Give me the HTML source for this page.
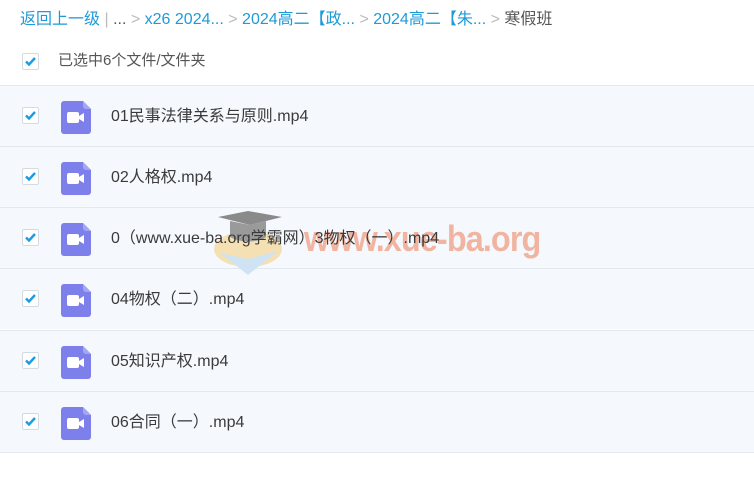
<!DOCTYPE html><html><head><meta charset="utf-8"><style>
body{margin:0;width:754px;height:482px;background:#fff;font-family:"Liberation Sans","Noto Sans CJK SC",sans-serif;overflow:hidden;position:relative}
.bc{position:absolute;left:20px;top:5px;font-size:16px;color:#1f9ad9;white-space:nowrap}
.bc .g{color:#bbb}.bc .k{color:#555}
.cb{position:absolute;left:22px;width:17px;height:17px;border:1px solid #d6dbe2;border-radius:2px;background:#fff;box-sizing:border-box}
.cb svg{position:absolute;left:1px;top:1px}
.sel{position:absolute;left:58px;top:49px;font-size:15px;color:#555}
.row{position:absolute;left:0;width:754px;height:61px;background:#f5f9fd;border-top:1px solid #e1e8f0;box-sizing:border-box}
.row .cb{top:21px}
.ic{position:absolute;left:61px;top:15px;width:30px;height:33px}
.nm{position:absolute;left:111px;top:16px;font-size:16px;color:#3a3a3a;white-space:nowrap;z-index:2}
.bot{position:absolute;left:0;top:452px;width:754px;border-top:1px solid #e1e8f0}
.wm{position:absolute;left:304px;top:218px;font-size:36px;font-weight:bold;color:#f0b4a0;letter-spacing:-1px;transform:scaleX(.9);transform-origin:left;z-index:1}
.cap{position:absolute;left:208px;top:207px;z-index:1}
</style></head><body>
<div class="bc">返回上一级 <span class="g">|</span> <span class="k">...</span> <span class="g">&gt;</span> x26 2024... <span class="g">&gt;</span> 2024高二【政... <span class="g">&gt;</span> 2024高二【朱... <span class="g">&gt;</span> <span class="k">寒假班</span></div>
<div class="cb" style="top:53px"><svg width="13" height="13" viewBox="0 0 13 13"><path d="M2 6.5l3 3 6-6.5" stroke="#1a9be6" stroke-width="2.4" fill="none"/></svg></div>
<div class="sel">已选中6个文件/文件夹</div>
<div class="row" style="top:85px"></div>
<div class="row" style="top:146px"></div>
<div class="row" style="top:207px"></div>
<div class="row" style="top:268px"></div>
<div class="row" style="top:330px"></div>
<div class="row" style="top:391px"></div>
<div class="bot"></div>
<svg class="cap" width="80" height="70" viewBox="0 0 80 70"><ellipse cx="40" cy="42" rx="34" ry="18" fill="#f5d9a0" opacity=".8"/><path d="M12 46l28 22 30-24-30 8z" fill="#cfe3f2"/><path d="M10 10l30-6 34 6-32 8z" fill="#8a8a8a"/><path d="M22 14v16c10 6 28 6 36 0V14l-16 4z" fill="#9a9a9a"/></svg>
<div class="wm">www.xue-ba.org</div>
<script>
var names=["01民事法律关系与原则.mp4","02人格权.mp4","0（www.xue-ba.org学霸网）3物权（一）.mp4","04物权（二）.mp4","05知识产权.mp4","06合同（一）.mp4"];
var rows=document.querySelectorAll('.row');
rows.forEach(function(r,i){r.innerHTML='<div class="cb"><svg width="13" height="13" viewBox="0 0 13 13"><path d="M2 6.5l3 3 6-6.5" stroke="#1a9be6" stroke-width="2.4" fill="none"/></svg></div><svg class="ic" viewBox="0 0 30 33"><path d="M3 0h19l8 8v22a3 3 0 0 1-3 3H3a3 3 0 0 1-3-3V3a3 3 0 0 1 3-3z" fill="#7d80ea"/><path d="M22 0l8 8h-5a3 3 0 0 1-3-3z" fill="#a3a6f2"/><rect x="6" y="11" width="12" height="11" rx="2" fill="#fff"/><path d="M18 15l5-3v9l-5-3z" fill="#fff"/></svg><div class="nm">'+names[i]+'</div>';});
</script>
</body></html>
